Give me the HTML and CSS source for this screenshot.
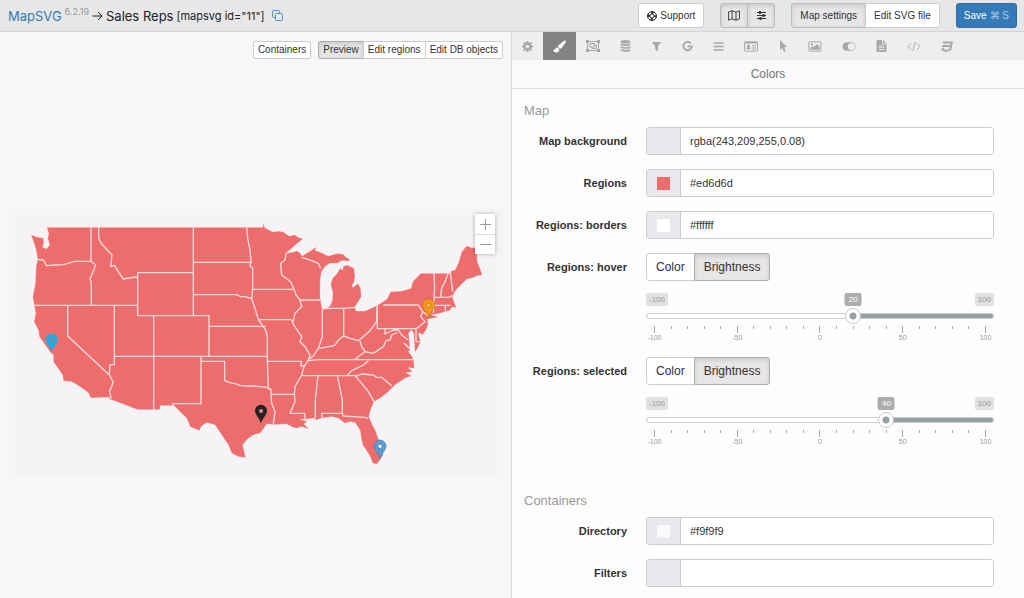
FILE: index.html
```
<!DOCTYPE html>
<html lang="en">
<head>
  <meta charset="UTF-8">
  <meta name="viewport" content="width=device-width, initial-scale=1.0">
  <title>MapSVG - Sales Reps</title>
  <link rel="stylesheet" href="styles.css">
</head>
<body>
  <header class="topbar">
    <h1 class="title">
      <a href="#">MapSVG</a>
      <sup>6.2.19</sup>
      <svg class="arrow" width="11" height="10" viewBox="0 0 11 10"><path d="M0.5 5H10M6 1l4 4-4 4"/></svg>
      <span>Sales Reps</span>
      <span class="shortcode">[mapsvg id="11"]</span>
      <button class="copy" aria-label="Copy shortcode">
        <svg width="11" height="11" viewBox="0 0 11 11"><rect x="3.5" y="3.5" width="7" height="7" rx="1"/><path d="M3.500 7.500H1.500a1 1 0 0 1-1-1v-5a1 1 0 0 1 1-1h5a1 1 0 0 1 1 1v2"/></svg>
      </button>
    </h1>
    <div class="actions">
      <button class="btn">
        <svg width="10" height="10" viewBox="0 0 10 10"><circle cx="5" cy="5" r="3.300" fill="none" stroke="currentColor" stroke-width="2.600" stroke-dasharray="2.600 2.580" stroke-dashoffset="1.300"/><circle cx="5" cy="5" r="4.500" fill="none" stroke="currentColor"/><circle cx="5" cy="5" r="2" fill="none" stroke="currentColor"/></svg>
        Support
      </button>
      <div class="btn-group">
        <button class="btn active icon-btn" aria-label="Show map">
          <svg width="12" height="11" viewBox="0 0 12 11"><path d="M.5 2L4 .7l4 1.500L11.500.8v8L8 10.300 4 8.800.5 10.200zM4 .7v8.100M8 2.200v8.100" fill="none" stroke="currentColor" stroke-width=".9"/></svg>
        </button>
        <button class="btn active icon-btn" aria-label="Show settings">
          <svg width="9" height="9" viewBox="0 0 9 9" stroke="currentColor"><path d="M0 1.500h9M0 4.500h9M0 7.500h9"/><path d="M3 0v3M6.500 3v3M3.500 6v3" stroke-width="2"/></svg>
        </button>
      </div>
      <div class="btn-group">
        <button class="btn active">Map settings</button>
        <button class="btn">Edit SVG file</button>
      </div>
      <button class="btn btn-primary">Save <span class="keys">⌘ S</span></button>
    </div>
  </header>

  <main class="panels">
    <section class="preview">
      <div class="view-bar">
        <button class="btn btn-xs">Containers</button>
        <div class="btn-group">
          <button class="btn btn-xs active">Preview</button>
          <button class="btn btn-xs">Edit regions</button>
          <button class="btn btn-xs">Edit DB objects</button>
        </div>
      </div>

      <div class="map">
        <svg class="map-svg" viewBox="27 27 1482 795">
          <path class="land" d="M140 82H788L790 68 795 84 820 96 835 93 850 96 868 108 885 104 895 112 910 116 890 132 872 148 858 160 880 156 890 152 900 158 906 168 935 150 950 140 945 151 965 158 985 168 1012 160 1030 163 1038 172 1048 176 1049 183 1025 182 1012 190 990 190 975 200 965 215 961 235 960 290 965 320 968 329 975 327 990 318 997 300 998 275 992 255 997 235 1010 222 1020 205 1028 210 1030 198 1042 195 1062 205 1065 225 1063 245 1055 258 1060 262 1074 250 1082 265 1084 290 1075 305 1065 322 1068 333 1095 333 1130 317 1160 298 1172 275 1205 273 1233 265 1238 245 1262 220H1350L1355 212 1365 210 1375 190 1385 155 1400 137 1415 143 1430 142 1432 185 1440 205 1447 225 1430 228 1415 235 1400 238 1385 253 1370 268 1362 280 1358 292 1362 305 1370 325 1358 320 1348 332 1320 340 1295 345 1318 351 1290 356 1282 358 1285 372 1278 390 1268 405 1258 398 1256 404 1262 425 1255 440 1245 458 1243 430 1241 400 1235 390 1226 398 1228 420 1230 445 1218 432 1210 430 1232 450 1225 454 1237 470 1241 480 1243 505 1225 503 1238 515 1218 518 1235 528 1215 535 1200 545 1185 555 1160 580 1140 595 1122 605 1112 630 1107 650 1115 670 1128 695 1140 730 1150 765 1140 780 1130 793 1118 790 1108 765 1095 745 1088 735 1083 710 1080 690 1065 668 1050 665 1035 670 1015 655 995 650 965 655 950 660 940 655 920 658 900 658 922 664 912 672 928 688 905 680 890 685 875 680 860 672 825 674 800 672 792 685 780 700 760 705 742 718 728 735 733 755 737 773 715 770 695 760 685 735 665 705 645 675 620 668 605 678 598 692 570 680 560 655 540 635 517 612V617H480V629H413L328 597V592L272 594 265 578 240 560 215 545 190 543 188 525 160 485 160 465 150 455 118 410 115 390 102 365 107 340 98 290 106 250 108 200 113 178 108 150 102 130 93 104 112 111 130 114 132 128 128 142 140 146 149 135 143 115 146 100z"/>
          <g class="borders">
            <path d="M110 178L130 180 140 197 165 195 190 194 225 184H275M273 82V184L287 195 270 238 274 245V316M103 316H413M203 316V408L328 525M343 316V494L330 494 328 525 340 547 328 575 334 595M296 82V115L305 132 322 150 336 165 332 200 343 196 355 215 370 237 385 234 408 231 413 235"/>
            <path d="M413 218H580V347H413zM580 82V218M580 187H753M580 284H710L722 290H735L755 296M461 347V629M580 347H627V469M343 469H800M627 379H797M603 469V611H517M603 484H674V542L690 548 705 551 720 556 740 558 760 558 780 560 795 561 812 568"/>
            <path d="M740 82L743 115 750 150 753 187 750 198 758 205V268L755 296 765 325 775 359 797 390 802 410V480L805 565 813 568V582L815 610 825 635 820 672M755 268H880M775 359H873L878 365M802 484H905L902 498H912M815 583H883"/>
            <path d="M858 160L855 180 842 190 845 225 872 245 882 268 888 285 900 300 905 320 885 340 878 370 905 410 900 425 915 440 930 465 925 480 912 500 905 525 885 560 883 582 885 605 870 640H914L916 658M900 300H960M905 172L935 182 955 190 962 205M967 325H1031L1065 322M967 330V410L955 445M1031 323V408"/>
            <path d="M925 478L940 468 955 445 970 443 985 440 1005 436 1015 420 1031 408 1050 415 1075 422 1092 408 1110 392 1130 365 1132 317M922 482L955 479H1240M905 527H1075M1042 525L1055 512 1070 505 1090 495 1105 482M954 527L946 600V655M1012 527L1027 600V640M967 655L965 640H1027L1030 648 1095 652 1105 655M1065 527L1085 550 1105 575 1122 605M1065 530L1085 522 1120 525 1130 532H1145L1175 557"/>
            <path d="M1065 478L1095 455 1085 440 1080 422M1095 455L1120 460 1150 440 1158 422 1170 420 1175 405 1192 398M1132 317V386H1248L1260 378 1275 365 1262 350 1268 335 1255 315H1150M1155 386V402L1180 390 1195 390 1205 405 1225 420M1248 386V425H1260M1302 220L1304 260 1302 292 1300 340M1345 218L1335 245 1325 265 1322 292M1350 212L1358 275M1302 292H1345L1358 287M1302 316H1352M1336 316V335M1268 335L1285 347"/>
          </g>
          <g class="pin pin-cyan" transform="translate(155 454)"><path d="M0 0C-3-14-18-24-18-35a18 18 0 0 1 36 0C18-24 3-14 0 0z"/><circle cy="-35" r="6"/></g>
          <g class="pin pin-black" transform="translate(783 671)"><path d="M0 0C-3-16-18-26-18-39a18 18 0 0 1 36 0C18-26 3-16 0 0z"/><circle cy="-38" r="6"/></g>
          <g class="pin pin-orange" transform="translate(1286 354)"><path d="M0 0C-3-16-18-26-18-39a18 18 0 0 1 36 0C18-26 3-16 0 0z"/><circle cy="-38" r="7"/></g>
          <g class="pin pin-blue" transform="translate(1140 777)"><path d="M0 0C-3-16-18-26-18-39a18 18 0 0 1 36 0C18-26 3-16 0 0z"/><circle cy="-38" r="6"/></g>
        </svg>
        <div class="zoom">
          <button aria-label="Zoom in"><svg width="11" height="11" viewBox="0 0 11 11"><path d="M5.500 0v11M0 5.500h11"/></svg></button>
          <button aria-label="Zoom out"><svg width="11" height="11" viewBox="0 0 11 11"><path d="M0 5.500h11"/></svg></button>
        </div>
      </div>
    </section>

    <section class="settings">
      <nav class="tabs">
        <button aria-label="Settings"><svg width="11" height="11" viewBox="0 0 11 11"><circle cx="5.500" cy="5.500" r="2.900" fill="none" stroke="currentColor" stroke-width="2.200"/><path d="M5.500 0v2M5.500 9v2M0 5.500h2M9 5.500h2M1.600 1.600L3 3M8 8l1.400 1.400M1.600 9.400L3 8M8 3l1.400-1.400" stroke="currentColor" stroke-width="2"/></svg></button>
        <button class="active" aria-label="Colors"><svg width="13" height="13" viewBox="0 0 13 13"><path d="M12.500.7c.5.500.5 1 .1 1.700L9 7.600C8.200 8.700 7.400 9 6.600 8.500L5.300 7.300c-.5-.7-.3-1.400.5-2.200L10.800.9c.7-.6 1.200-.7 1.700-.2zM4.600 7.600l1.700 1.600c.2 2-1.100 3.300-3.200 3.300C1.500 12.500.5 11.400 0 9.700c1.300.6 1.700-.1 2.200-1 .6-.9 1.500-1.400 2.400-1.100z"/></svg></button>
        <button aria-label="Regions"><svg width="14" height="12" viewBox="0 0 14 12"><path d="M1.500 1.500h11v9h-11z" fill="none" stroke="currentColor"/><path d="M0 0h3v3H0zM11 0h3v3h-3zM0 9h3v3H0zM11 9h3v3h-3z"/><path d="M4 3.500h4.500v3.500H4zM8.500 5H10.500v3.500H6V7" fill="none" stroke="currentColor"/></svg></button>
        <button aria-label="Database"><svg width="11" height="12" viewBox="0 0 11 12"><ellipse cx="5.500" cy="1.800" rx="5" ry="1.800"/><path d="M.5 3.200c2 1.500 8 1.500 10 0v1.600c-1.500 1.700-8.500 1.700-10 0zM.5 6c2 1.500 8 1.500 10 0v1.600c-1.500 1.700-8.500 1.700-10 0zM.5 8.800c2 1.500 8 1.500 10 0v1.500c-1.500 2-8.500 2-10 0z"/></svg></button>
        <button aria-label="Filters"><svg width="11" height="11" viewBox="0 0 11 11"><path d="M1.500 1h8c.5 0 .6.500.3.800L7 4.800v4.900c0 .4-.4.500-.7.300L4.200 8.300 4 4.800 1.200 1.800C.9 1.500 1 1 1.500 1z"/></svg></button>
        <button aria-label="Google"><svg width="11" height="11" viewBox="0 0 11 11"><path d="M8.800 2.300A4.200 4.200 0 1 0 9.700 6V5.300H5.700" fill="none" stroke="currentColor" stroke-width="1.800"/></svg></button>
        <button aria-label="Menu"><svg width="11" height="11" viewBox="0 0 11 11"><path d="M.5 2h10M.5 5.500h10M.5 9h10" stroke="currentColor" stroke-width="1.500"/></svg></button>
        <button aria-label="Details"><svg width="14" height="11" viewBox="0 0 14 11"><rect x=".5" y=".8" width="13" height="9.400" rx="1" fill="none" stroke="currentColor"/><path d="M1 1h12v1.500H1zM2.500 8.300V6.800L4 6h1.200l1.300.8v1.500z"/><circle cx="4.500" cy="4.800" r="1.400"/><path d="M8 4.500h4M8 6.300h1.600M10.500 6.300h1.500M8 8h4" stroke="currentColor" stroke-width=".9"/></svg></button>
        <button aria-label="Actions"><svg width="10" height="12" viewBox="0 0 10 12"><path d="M2 0l7 7.100-3 .2 1.700 3.900-1.700.8-1.700-4L2 10z"/></svg></button>
        <button aria-label="Images"><svg width="14" height="11" viewBox="0 0 14 11"><rect x=".9" y=".8" width="12" height="9.400" rx="1" fill="none" stroke="currentColor"/><path d="M2.500 8.700V7l2-2 1.200 1.200L9 3l2.500 2.500v3.200z"/><circle cx="4" cy="3.300" r="1.100"/></svg></button>
        <button aria-label="Layers"><svg width="14" height="11" viewBox="0 0 14 11"><path d="M4.700 1.200h4.600a4.300 4.300 0 0 1 0 8.600H4.700a4.300 4.300 0 0 1 0-8.600zM9.400 2a3.500 3.500 0 1 0 0 7 3.500 3.500 0 0 0 0-7z" fill-rule="evenodd"/></svg></button>
        <button aria-label="Templates"><svg width="11" height="12" viewBox="0 0 11 12"><path d="M1.500 0H6v3.500c0 .5.300.8.800.8h3.700V11c0 .6-.4 1-1 1h-8c-.6 0-1-.4-1-1V1c0-.6.400-1 1-1zM7 0l3.500 3.400H7zM2.800 5.500v.8h5.400v-.8zM2.800 7.300v.8h5.400v-.8zM2.800 9.100v.8h5.400v-.8z" fill-rule="evenodd"/></svg></button>
        <button aria-label="Javascript"><svg width="14" height="11" viewBox="0 0 14 11"><path d="M4 2.300L1 5.500l3 3.200M10 2.300l3 3.200-3 3.200M8.200 1L5.800 10" fill="none" stroke="currentColor"/></svg></button>
        <button aria-label="CSS"><svg width="12" height="11" viewBox="0 0 12 11"><path d="M2 .5h10L10.300 9 5 10.900.4 9.200.9 6.800h2l-.2 1.200 2.700 1 3.100-1 .4-2.100H1.100l.4-2h7.800l.3-1.400H1.600z"/></svg></button>
      </nav>
      <h2 class="panel-title">Colors</h2>

      <form class="form">
        <h3>Map</h3>
        <div class="row">
          <label for="map-bg">Map background</label>
          <div class="color-input"><span class="swatch"></span><input type="text" id="map-bg" value="rgba(243,209,255,0.08)"></div>
        </div>
        <div class="row">
          <label for="regions">Regions</label>
          <div class="color-input"><span class="swatch"><i style="background:#ed6d6d"></i></span><input type="text" id="regions" value="#ed6d6d"></div>
        </div>
        <div class="row">
          <label for="borders">Regions: borders</label>
          <div class="color-input"><span class="swatch"><i style="background:#ffffff"></i></span><input type="text" id="borders" value="#ffffff"></div>
        </div>
        <div class="row">
          <label for="hover">Regions: hover</label>
          <div class="btn-group">
            <button type="button" class="btn btn-md">Color</button>
            <button type="button" class="btn btn-md active">Brightness</button>
          </div>
        </div>
        <div class="slider" style="--pos:0.6">
          <div class="bubbles"><span>-100</span><output for="hover">20</output><span>100</span></div>
          <input type="range" id="hover" min="-100" max="100" value="20">
          <div class="ticks"></div>
          <div class="scale"><span>-100</span><span>-50</span><span>0</span><span>50</span><span>100</span></div>
        </div>
        <div class="row">
          <label for="selected">Regions: selected</label>
          <div class="btn-group">
            <button type="button" class="btn btn-md">Color</button>
            <button type="button" class="btn btn-md active">Brightness</button>
          </div>
        </div>
        <div class="slider" style="--pos:0.7">
          <div class="bubbles"><span>-100</span><output for="selected">40</output><span>100</span></div>
          <input type="range" id="selected" min="-100" max="100" value="40">
          <div class="ticks"></div>
          <div class="scale"><span>-100</span><span>-50</span><span>0</span><span>50</span><span>100</span></div>
        </div>

        <h3 class="next">Containers</h3>
        <div class="row">
          <label for="directory">Directory</label>
          <div class="color-input"><span class="swatch"><i style="background:#f9f9f9"></i></span><input type="text" id="directory" value="#f9f9f9"></div>
        </div>
        <div class="row">
          <label for="filters">Filters</label>
          <div class="color-input"><span class="swatch"></span><input type="text" id="filters" value=""></div>
        </div>
      </form>
    </section>
  </main>

  <script>
    // one tick per 10 units, a longer one every 50
    document.querySelectorAll(".ticks").forEach(function (el) {
      for (let v = -100; v <= 100; v += 10) {
        const tick = document.createElement("i");
        if (v % 50 === 0) tick.className = "major";
        el.appendChild(tick);
      }
    });

    document.querySelectorAll(".slider input").forEach(function (input) {
      input.addEventListener("input", function () {
        const box = input.parentElement;
        box.style.setProperty("--pos", (Number(input.value) + 100) / 200);
        box.querySelector("output").textContent = input.value;
      });
    });
  </script>
</body>
</html>
```
FILE: styles.css
```
* {
  box-sizing: border-box;
}

body {
  margin: 0;
  min-height: 100vh;
  display: flex;
  flex-direction: column;
  font-family: "Liberation Sans", Arial, sans-serif;
  font-size: 11px;
  color: #333;
  background: #f7f7f7;
}

button,
input {
  font-family: inherit;
}

button {
  cursor: pointer;
}

svg {
  display: block;
  fill: currentColor;
}

/* top bar */

.topbar {
  display: flex;
  justify-content: space-between;
  align-items: center;
  height: 32px;
  padding: 0 7px 0 8px;
  background: #e7e7e7;
  border-bottom: 1px solid #d4d4d4;
}

.title {
  display: flex;
  align-items: center;
  gap: 3px;
  margin: 0;
  font-family: Inter, sans-serif;
  font-size: 13px;
  font-weight: 400;
  line-height: 20px;
  color: #222;
}

.title a {
  color: #337ab7;
  text-decoration: none;
}

.title sup {
  font-size: 9px;
  line-height: 12px;
  align-self: flex-start;
  color: #999;
}

.arrow {
  fill: none;
  stroke: #222;
}

.shortcode {
  font-size: 11px;
}

.copy {
  padding: 0;
  margin-left: 4px;
  border: 0;
  background: none;
  color: #4a90d9;
}

.copy svg {
  fill: none;
  stroke: currentColor;
}

.actions {
  display: flex;
  gap: 16px;
}

.btn {
  display: flex;
  align-items: center;
  justify-content: center;
  gap: 3px;
  height: 25px;
  padding: 0 8px;
  font-size: 10px;
  line-height: 14px;
  color: #333;
  background: #fff;
  border: 1px solid #ccc;
  border-radius: 3px;
  white-space: nowrap;
}

.btn.active {
  background: #e6e6e6;
  border-color: #adadad;
  box-shadow: inset 0 2px 4px rgba(0, 0, 0, 0.125);
}

.btn-group {
  display: flex;
}

.btn-group .btn + .btn {
  margin-left: -1px;
  border-top-left-radius: 0;
  border-bottom-left-radius: 0;
}

.btn-group .btn:not(:last-child) {
  border-top-right-radius: 0;
  border-bottom-right-radius: 0;
}

.topbar .btn.active {
  border-color: #bbb;
}

.icon-btn {
  width: 28px;
  padding: 0;
}

.btn-primary {
  padding: 0 7px;
  color: #fff;
  background: #337ab7;
  border-color: #2e6da4;
}

.keys {
  opacity: 0.6;
}

.btn-xs {
  height: 18px;
  padding: 0 4px;
  border-radius: 2px;
}

.btn-md {
  height: 28px;
  padding: 0 9px;
  font-size: 12px;
}

/* panels */

.panels {
  flex: 1;
  display: grid;
  grid-template-columns: 1fr 1fr;
}

.preview {
  border-right: 1px solid #ddd;
}

.view-bar {
  display: flex;
  justify-content: flex-end;
  gap: 7px;
  padding: 9px 8px 0 0;
}

.map {
  position: relative;
  margin: 150px 8px 0 9px;
  background: #f5f3f6;
}

.map-svg {
  width: 100%;
  height: auto;
}

.land {
  fill: #ed6d6d;
  stroke: #fff;
  stroke-width: 1;
}

.borders {
  fill: none;
  stroke: #fbdcdc;
  stroke-width: 4;
  stroke-linejoin: round;
}

.pin-cyan { fill: #12aeea; }
.pin-cyan circle { fill: #c0707c; }
.pin-black { fill: #222; }
.pin-black circle { fill: #ed8080; }
.pin-orange { fill: #f39a1e; stroke: #c87410; stroke-width: 2; }
.pin-orange circle { fill: #f6b550; stroke: #b96b10; }
.pin-blue { fill: #5b9bd0; stroke: #3f7cae; stroke-width: 2; }
.pin-blue circle { fill: #fff; }

.zoom {
  position: absolute;
  top: 5px;
  right: 8px;
  box-shadow: 0 0 4px rgba(0, 0, 0, 0.3);
}

.zoom button {
  display: flex;
  align-items: center;
  justify-content: center;
  width: 20px;
  height: 20px;
  padding: 0;
  color: #999;
  background: #fff;
  border: 0;
}

.zoom button + button {
  border-top: 1px solid #ddd;
}

.zoom svg {
  stroke: currentColor;
}

.settings {
  background: #fdfdfd;
}

.tabs {
  display: flex;
  height: 28px;
  background: #eee;
}

.tabs button {
  display: flex;
  align-items: center;
  padding: 0 10px;
  color: #a8a8a8;
  background: none;
  border: 0;
}

.tabs .active {
  color: #fff;
  background: #838383;
}

.panel-title {
  margin: 0;
  font-size: 12px;
  font-weight: 400;
  line-height: 28px;
  text-align: center;
  color: #777;
  background: #fafafa;
  border-bottom: 1px solid #ddd;
}

/* settings form */

.form {
  padding: 14px 30px 10px 12px;
}

.form h3 {
  margin: 0 0 8px;
  font-size: 13px;
  font-weight: 400;
  line-height: 16px;
  color: #999;
}

.form h3.next {
  margin-top: 46px;
}

.row {
  display: grid;
  grid-template-columns: 103px 1fr;
  gap: 19px;
  align-items: center;
  margin-bottom: 14px;
}

.row:last-child {
  margin-bottom: 0;
}

.row label {
  font-weight: bold;
  text-align: right;
  white-space: nowrap;
}

.color-input {
  display: flex;
  height: 28px;
  border: 1px solid #ccc;
  border-radius: 3px;
  overflow: hidden;
}

.swatch {
  display: flex;
  align-items: center;
  justify-content: center;
  width: 34px;
  background: #e9e9ed;
  border-right: 1px solid #ccc;
}

.swatch i {
  width: 13px;
  height: 13px;
}

.color-input input {
  flex: 1;
  min-width: 0;
  padding: 0 9px;
  font-size: 11px;
  color: #333;
  background: #fff;
  border: 0;
  outline: none;
}

.slider {
  position: relative;
  margin: -2px 0 14px 122px;
}

.bubbles {
  display: flex;
  justify-content: space-between;
  font-size: 8px;
  line-height: 13px;
}

.bubbles span,
.bubbles output {
  padding: 0 3px;
  color: #999;
  background: #e1e1e1;
  border-radius: 2px;
}

.bubbles output {
  position: absolute;
  left: calc(8px + (100% - 16px) * var(--pos));
  transform: translateX(-50%);
  padding: 0 4px;
  color: #fff;
  background: #adadad;
}

.slider input {
  display: block;
  width: 100%;
  height: 16px;
  margin: 2px 0;
  appearance: none;
  background: none;
}

.slider input::-webkit-slider-runnable-track {
  height: 6px;
  border: 1px solid #ccc;
  border-radius: 3px;
  background: linear-gradient(to right, #fff calc(8px + (100% - 16px) * var(--pos)), #95a0a4 0);
}

.slider input::-webkit-slider-thumb {
  appearance: none;
  width: 16px;
  height: 16px;
  margin-top: -6px;
  border: 1px solid #ccc;
  border-radius: 50%;
  background: radial-gradient(circle, #95a0a4 3px, #fff 4px);
}

.ticks {
  display: flex;
  justify-content: space-between;
  height: 7px;
  margin: 0 8px;
}

.ticks i {
  width: 1px;
  height: 3px;
  background: #aaa;
}

.ticks .major {
  height: 7px;
}

.scale {
  display: flex;
  justify-content: space-between;
  margin: 0 8px;
  font-size: 7px;
  line-height: 10px;
  color: #999;
}

.scale span {
  display: flex;
  justify-content: center;
  width: 1px;
}
```
